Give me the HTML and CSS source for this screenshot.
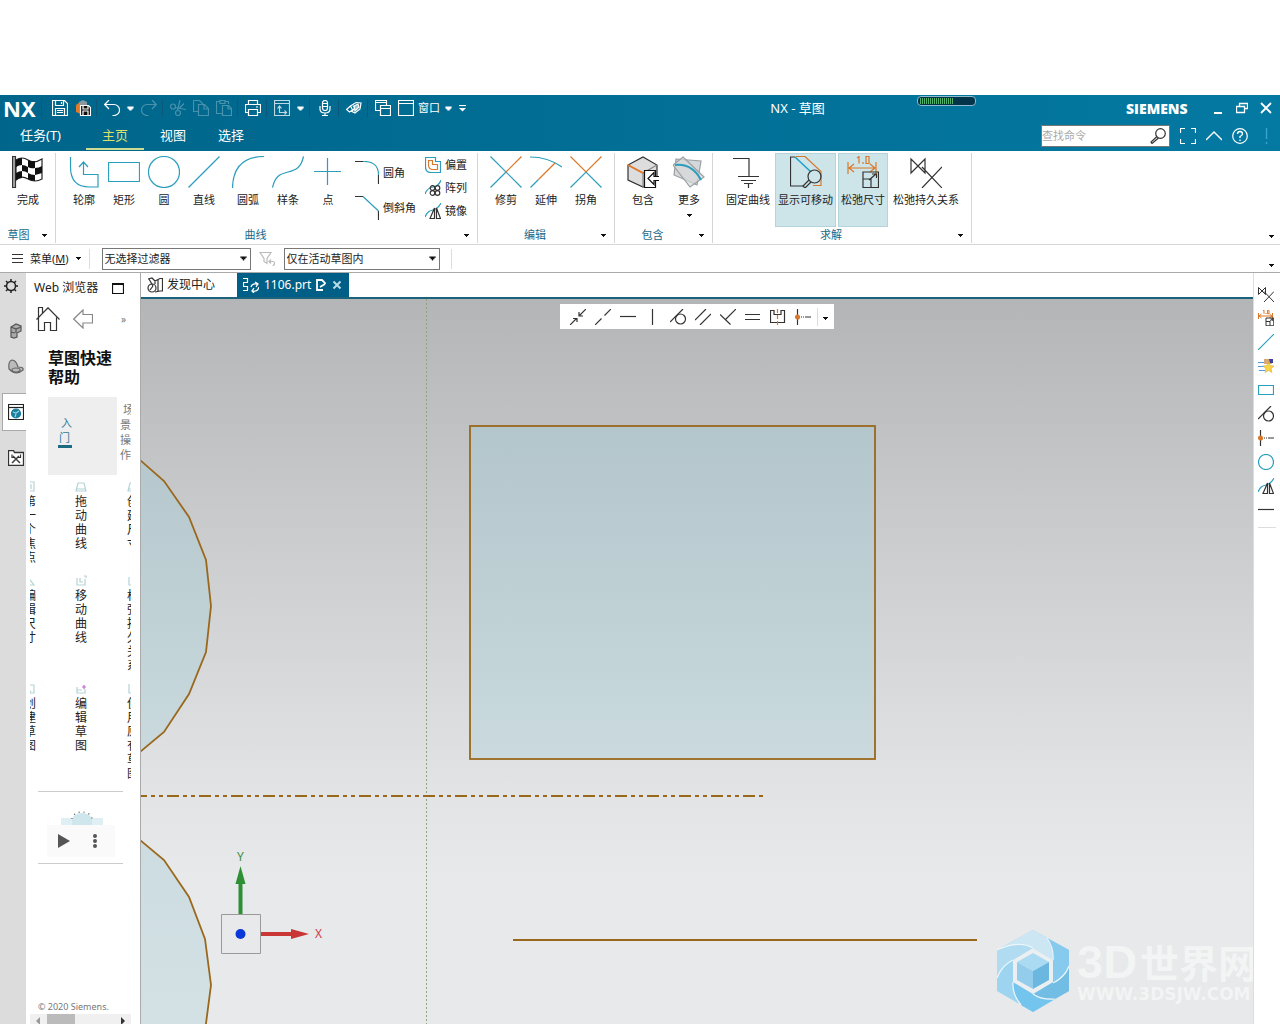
FILE: index.html
```html
<!DOCTYPE html>
<html lang="zh-CN">
<head>
<meta charset="utf-8">
<title>NX - 草图</title>
<link rel="stylesheet" href="styles.css">
</head>
<body>
<svg class="defs" aria-hidden="true">
  <defs>
    <symbol id="caret" viewBox="0 0 7 7"><path d="M1 2h5v1h-1v1h-1v1h-1v-1h-1v-1h-1z" fill="currentColor"/></symbol>
    <symbol id="tangent" viewBox="0 0 16 16"><circle cx="10.500" cy="10" r="5"/><path d="M0 13L13 0"/></symbol>
    <symbol id="mid" viewBox="0 0 16 16"><path d="M2.500 0v16M10 8h6" /><path d="M4 8h6" stroke-dasharray="1 1"/><circle cx="2.500" cy="8" r="2" fill="#d9792b" stroke="#d9792b"/></symbol>
    <symbol id="mirror" viewBox="0 0 16 16"><path d="M0 14C2 9 4 8 8 7S14 4 16 0" stroke="#2b9dbd"/><path d="M9.500 5v10.500H5zM11.500 5v10.500H15.500z"/></symbol>
    <symbol id="relax" viewBox="0 0 32 32"><path d="M1 3v14L15 3v14zM32 11L12 32M12 11L32 32"/></symbol>
    <symbol id="dim" viewBox="0 0 32 32"><path d="M1 6v12M29 6v12M2 12h26M7 8l-5 4 5 4M23 8l5 4-5 4" stroke="#d9792b"/><path d="M10 2l2-1.500v7M22 .5h-3v7h3zM16 6v2" stroke="#d9792b"/><path d="M16 16h15.500v15.500H16zM16 23h8v8M22 24l7-6M25 18h4.500v4"/></symbol>
  </defs>
</svg>
<div class="app">
  <header class="head">
    <div class="titlebar">
      <div class="quick">
        <span class="logo">NX</span><i class="sep first"></i>
        <button class="q" aria-label="保存"><svg viewBox="0 0 16 16"><path d="M.5.500h12l3 3v12H.5zM3.500.500v5h8v-5M9.500 2v2M3.500 15V8.500h9V15M5 10.500h6M5 12.500h6"/></svg></button>
        <button class="q" aria-label="另存"><svg viewBox="0 0 16 16"><path d="M1 5l4-3 5 2v9l-4 1-5-2z" fill="#e07a28" stroke="none"/><path d="M4 2l4-2 4 2v4H5z" fill="#8b98a0" stroke="none"/><path d="M5.500 5.500h8l2 2v8h-10z" fill="#111" stroke="#fff"/><path d="M8 6v3h5V6M8 15v-4h5v4"/></svg></button>
        <i class="sep"></i>
        <button class="q" aria-label="撤消"><svg viewBox="0 0 16 16"><path d="M5 0L.7 4.500 5 9M1 4.500h9a5.500 5.500 0 0 1 0 11H8.500"/></svg></button>
        <button class="c" aria-label="撤消列表"><svg><use href="#caret"/></svg></button>
        <button class="q dim" aria-label="重做"><svg viewBox="0 0 16 16"><path d="M11 0l4.300 4.500L11 9M15 4.500H6a5.500 5.500 0 0 0 0 11h1.500"/></svg></button>
        <i class="sep"></i>
        <button class="q dim" aria-label="剪切"><svg viewBox="0 0 16 16"><circle cx="3" cy="6.500" r="2.500"/><circle cx="8" cy="13" r="2.500"/><path d="M5 7.500l11 2M7.500 10.500L10 0M9 8.500l5-5"/></svg></button>
        <button class="q dim" aria-label="复制"><svg viewBox="0 0 16 16"><path d="M5.500 11.500h-5V.5h6l3 3v1M5.500 4.500h6l4 4v7h-10zM11 5v4h4"/></svg></button>
        <button class="q dim" aria-label="粘贴"><svg viewBox="0 0 16 16"><path d="M6 13.500H.5v-12H4M9 1.500h3.500V4M4 .5h5v3H4zM6.500 5.500h6l3 3v7h-9zM12 6v3h3"/></svg></button>
        <i class="sep"></i>
        <button class="q" aria-label="打印"><svg viewBox="0 0 16 16"><path d="M3.500 4V.5h9V4M3.500 12.500h-3v-8h15v8h-3M3.500 9.500h9v6h-9zM11 7h2"/></svg></button>
        <i class="sep"></i>
        <button class="q soft" aria-label="草图视图"><svg viewBox="0 0 16 16"><path d="M.5.500h15v15H.5zM.5 3.500h15M5.500 7v5.500H12M3.500 8.500L5.500 6l2 2.500M10.500 10.500l2 2-2 2"/></svg></button>
        <button class="c" aria-label="视图列表"><svg><use href="#caret"/></svg></button>
        <i class="sep"></i>
        <button class="q" aria-label="语音"><svg viewBox="0 0 16 16"><rect x="5.500" y=".5" width="5" height="10" rx="2.500"/><path d="M3 6v3q0 4 5 4t5-4V6M8 13v3M5 15.500h6M6 3.500h4M6 6.500h4"/></svg></button>
        <i class="sep"></i>
        <button class="q" aria-label="橡皮擦"><svg viewBox="0 0 16 16"><path d="M.5 9.500l4-3.500 2 4-3 2zM4.500 6L10 2.500l5 .5-1 6-5 4-3-1.500 3-4-2-1.500" /><path d="M8 6l4-2 1 3-4 4z" fill="#9cc4d4"/></svg></button>
        <i class="sep"></i>
        <button class="q" aria-label="层叠窗口"><svg viewBox="0 0 16 16"><path d="M5 10.500H.5V.5h11v5M.5 2.500h11M5.500 5.500h10v10h-10zM5.500 8.500h10"/></svg></button>
        <button class="q" aria-label="新窗口"><svg viewBox="0 0 16 16"><path d="M.5.500h15v15H.5zM.5 3.500h15"/></svg></button>
        <button class="qt">窗口</button>
        <button class="c" aria-label="窗口列表"><svg><use href="#caret"/></svg></button>
        <button class="c" aria-label="自定义"><svg viewBox="0 0 7 7"><path d="M0 .5h7"/><path d="M0 3h7L3.500 6.500z" fill="#fff" stroke="none"/></svg></button>
      </div>
      <div class="title">NX - 草图</div>
      <div class="siemens">SIEMENS</div>
      <div class="winbtns">
        <button aria-label="最小化"><svg viewBox="0 0 12 12"><path d="M2 11h8" stroke-width="2"/></svg></button>
        <button aria-label="还原"><svg viewBox="0 0 12 12"><path d="M3.500 4V1.500h8v5H9M.5 4.500h8v6h-8z" stroke-width="1.300"/></svg></button>
        <button aria-label="关闭"><svg viewBox="0 0 12 12"><path d="M1 1l10 10M11 1L1 11" stroke-width="1.800"/></svg></button>
      </div>
      <div class="meter"><i></i></div>
    </div>
    <div class="menubar">
      <nav class="tabs">
        <a href="#" class="task">任务(T)</a><a href="#" class="on">主页</a><a href="#">视图</a><a href="#">选择</a>
      </nav>
      <label class="search"><input type="text" placeholder="查找命令" aria-label="查找命令"><svg viewBox="0 0 16 16"><circle cx="10.500" cy="5.500" r="4.800"/><path d="M7 8.500L1 14l1 1.500L8.500 10"/></svg></label>
      <div class="helpers">
        <button aria-label="全屏"><svg viewBox="0 0 16 16"><path d="M.5 5V.5H5M11 .5h4.500V5M15.500 11v4.500H11M5 15.500H.5V11"/></svg></button>
        <button aria-label="折叠功能区"><svg viewBox="0 0 16 16"><path d="M0 12l8-8 8 8" stroke-width="1.400"/></svg></button>
        <button aria-label="帮助"><svg viewBox="0 0 16 16"><circle cx="8" cy="8" r="7.300"/><path d="M5.500 6q0-2.500 2.500-2.500T10.500 6Q10.500 7.200 8 8.500V10M8 11.500v1.500" stroke-width="1.300"/></svg></button>
        <button aria-label="通知"><svg viewBox="0 0 16 16"><path d="M8.500 0v11M8.500 14v2" stroke="#35a3cc" stroke-width="1.500"/></svg></button>
      </div>
    </div>
  </header>

  <section class="ribbon">
    <div class="group g1">
      <div class="tools"><button class="big"><svg viewBox="0 0 32 32"><path d="M.5.500h3v31h-3z" fill="#aaa" stroke="#333"/><path d="M4 4q6-4 12 0t14-1v20q-7 4-14 0T4 24z" fill="#fff" stroke="#222"/><path d="M4 4q3-2 6-2v7q-3 0-6 2zM16 4q3 2 7 1v7q-4 1-7-1zM10 9q3 0 6 2v6q-3-2-6-2zM23 12q4 0 7-2v7q-3 1-7 2zM4 17q3-2 6-2v7q-3 0-6 2zM16 17q3 2 7 2v6q-4 0-7-2z" fill="#111" stroke="none"/></svg>完成</button></div>
      <div class="foot"><span>草图</span><button class="c" aria-label="草图选项"><svg><use href="#caret"/></svg></button></div>
    </div>
    <div class="group g2">
      <div class="tools">
        <div class="set blue">
          <button class="big"><svg viewBox="0 0 32 32"><path d="M2.500 1v10q0 20 19 20h8.500V18.500H15.500V7M11 11l4.500-5 4.500 5"/></svg>轮廓</button>
          <button class="big"><svg viewBox="0 0 32 32"><path d="M.5 6.500h31v19H.5z"/></svg>矩形</button>
          <button class="big"><svg viewBox="0 0 32 32"><circle cx="16" cy="16" r="15.500"/></svg>圆</button>
          <button class="big"><svg viewBox="0 0 32 32"><path d="M.5 31.500l31-31"/></svg>直线</button>
        </div>
        <div class="set blue">
          <button class="big"><svg viewBox="0 0 32 32"><path d="M.5 32Q1 1 32 .5"/></svg>圆弧</button>
          <button class="big"><svg viewBox="0 0 32 32"><path d="M.5 31.500C3 20 8 18 16 16S29 12 31.500.5"/></svg>样条</button>
          <button class="big"><svg viewBox="0 0 32 32"><path d="M15.500 2v27M2 15.500h27"/></svg>点</button>
        </div>
        <div class="stack two">
          <button><svg viewBox="0 0 24 24"><path d="M0 .5h8M23.500 14v9"/><path d="M8 .5Q23.500 0 23.500 14" stroke="#2b9dbd"/></svg>圆角</button>
          <button><svg viewBox="0 0 24 24"><path d="M0 .5h8M23.500 15v9"/><path d="M8 .5L23.500 15" stroke="#2b9dbd"/></svg>倒斜角</button>
        </div>
        <div class="stack three">
          <button><svg viewBox="0 0 16 16"><path d="M.5.500h10v4h5v11H6Q.5 15.500.5 10z" stroke="#2b9dbd"/><path d="M3.500 3.500h4v4h5v5H8Q3.500 12.500 3.500 8z" stroke="#d9792b"/></svg>偏置</button>
          <button><svg viewBox="0 0 16 16"><path d="M0 14Q2 8 8 7T16 0" stroke="#2b9dbd"/><circle cx="7.500" cy="8" r="2.300"/><circle cx="12.500" cy="8" r="2.300"/><circle cx="7.500" cy="13" r="2.300"/><circle cx="12.500" cy="13" r="2.300"/></svg>阵列</button>
          <button><svg><use href="#mirror"/></svg>镜像</button>
        </div>
      </div>
      <div class="foot"><span>曲线</span><button class="c" aria-label="曲线选项"><svg><use href="#caret"/></svg></button></div>
    </div>
    <div class="group g3">
      <div class="tools">
        <button class="big"><svg viewBox="0 0 32 32"><path d="M.5.500l31 31M.5 31.500L16 16" stroke="#2b9dbd"/><path d="M16 16L31.500.5" stroke="#d9792b"/></svg>修剪</button>
        <button class="big"><svg viewBox="0 0 32 32"><path d="M0 1Q18 1 32 11M.5 31.500l8-8" stroke="#2b9dbd"/><path d="M8.500 23.500L25 7" stroke="#d9792b"/></svg>延伸</button>
        <button class="big"><svg viewBox="0 0 32 32"><path d="M.5 31.500L16 16l15.500 15.500" stroke="#2b9dbd"/><path d="M.5.500L16 16 31.500.5" stroke="#d9792b"/></svg>拐角</button>
      </div>
      <div class="foot"><span>编辑</span><button class="c" aria-label="编辑选项"><svg><use href="#caret"/></svg></button></div>
    </div>
    <div class="group g4">
      <div class="tools">
        <button class="big"><svg viewBox="0 0 32 32"><path d="M1 9l15-8 14 8v13l-14 9L1 24z" fill="#ddd"/><path d="M1 9l15 8 14-8M16 17v14" stroke="#888"/><path d="M1 9l15 8" stroke="#e87722" stroke-width="1.500"/><path d="M17.500 14.500h11v17h-11z" fill="#fff" stroke="#111"/><path d="M32 20.500h-5v-4l-6 6 6 6v-4h5" fill="#fff" stroke="#111"/></svg>包含</button>
        <button class="big"><svg viewBox="0 0 32 32"><path d="M3 3l25 2-4 24L1 19z" fill="#d5d8da" stroke="#9aa0a4"/><path d="M10 1l21 20-14 10L0 9z" fill="#d5d8da" fill-opacity=".7" stroke="#9aa0a4"/><path d="M2 9Q19 7 28 24" stroke="#2b9dbd" stroke-width="2"/></svg>更多<svg class="tri"><use href="#caret"/></svg></button>
      </div>
      <div class="foot"><span>包含</span><button class="c" aria-label="包含选项"><svg><use href="#caret"/></svg></button></div>
    </div>
    <div class="group g5">
      <div class="tools">
        <button class="big"><svg viewBox="0 0 32 32"><path d="M1 2.500h16v18M6 20.500h21M9 24.500h15M12 27.500h9M16.500 28v4"/></svg>固定曲线</button>
        <button class="big hot"><svg viewBox="0 0 32 32"><path d="M5 1H.5v29h13"/><path d="M5 1l16 15" stroke="#1a9fc9" stroke-width="1.500"/><path d="M6 .5h9l16 15v14h-8" stroke="#d9792b"/><circle cx="24.500" cy="20.500" r="6.500"/><path d="M19 24l-6 6 2 2 6-6"/></svg>显示可移动</button>
        <button class="big hot"><svg><use href="#dim"/></svg>松弛尺寸</button>
        <button class="big"><svg><use href="#relax"/></svg>松弛持久关系</button>
      </div>
      <div class="foot"><span>求解</span><button class="c" aria-label="求解选项"><svg><use href="#caret"/></svg></button></div>
    </div>
    <button class="c last" aria-label="功能区选项"><svg><use href="#caret"/></svg></button>
  </section>

  <section class="filters">
    <button class="menu"><svg class="ham" viewBox="0 0 12 12"><path d="M0 1.500h11M0 5.500h11M0 9.500h11"/></svg><span>菜单(<u>M</u>)</span><svg class="tri"><use href="#caret"/></svg></button>
    <i class="vr"></i>
    <span class="pick p1"><select aria-label="选择过滤器"><option>无选择过滤器</option></select><svg><use href="#caret"/></svg></span>
    <button class="funnel" aria-label="重置过滤器"><svg viewBox="0 0 16 16"><path d="M1 1.500h11l-4 6v5l-3-2v-3zM10 10.500h4q1.500 0 1.500 2t-2 2M12 8.500l-2 2 2 2"/></svg></button>
    <span class="pick p2"><select aria-label="选择范围"><option>仅在活动草图内</option></select><svg><use href="#caret"/></svg></span>
    <i class="vr"></i>
    <button class="c last" aria-label="工具条选项"><svg><use href="#caret"/></svg></button>
  </section>

  <main class="main">
    <nav class="rail">
      <button class="gear" aria-label="设置"><svg viewBox="0 0 16 16"><circle cx="8" cy="8" r="4.500" stroke-width="1.500"/><path d="M8 1v3M8 12v3M1 8h3M12 8h3M3 3l2 2M11 11l2 2M13 3l-2 2M5 11l-2 2" stroke-width="1.500"/></svg></button>
      <button aria-label="装配导航器"><svg viewBox="0 0 16 16"><path d="M3 4l5-3 5 2v5l-4 2v4l-3 1-3-1z" fill="#aaa" stroke="#555"/><path d="M3 4l5 2 5-2M8 6v4M3 9l4 1" stroke="#555"/></svg></button>
      <button aria-label="部件导航器"><svg viewBox="0 0 16 16"><path d="M1 10Q0 2 4 1q4 0 6 7 6 0 5 3-7 6-14-1z" fill="#bbb" stroke="#666"/><ellipse cx="8" cy="11" rx="4" ry="2" stroke="#666"/></svg></button>
      <button class="cur" aria-label="Web 浏览器"><svg viewBox="0 0 16 16"><path d="M.5.500h15v15H.5z" fill="#fff" stroke="#222"/><path d="M.5 3.500h15" stroke="#222"/><circle cx="8" cy="9.500" r="4.500" fill="#1b7f9e" stroke="#1b7f9e"/><path d="M5 8l3 1 3-2M7 13l1-3" stroke="#9fd3e2"/></svg></button>
      <button aria-label="重用库"><svg viewBox="0 0 16 16"><path d="M.5 15.500V.5h5l1 2h9v13z" fill="#fff" stroke="#333" stroke-width="1.300"/><path d="M5 6l7 7M11 6l-7 7" stroke="#444" stroke-width="1.600"/><path d="M4 4.500v3h3M12.500 4.500v3h-3"/></svg></button>
    </nav>

    <aside class="panel">
      <div class="phead"><span>Web 浏览器</span><button aria-label="最大化"><svg viewBox="0 0 12 12"><path d="M.5 1.500h11v10H.5zM.5 2.500h11"/></svg></button></div>
      <div class="pnav">
        <button aria-label="主页"><svg class="home" viewBox="0 0 24 24"><path d="M.5 12.500L12 .8l11.500 11.700M2.500 10.500v13h6v-8h6v8h6v-13M2.500 10V.5h4V6"/></svg></button>
        <button aria-label="后退"><svg class="back" viewBox="0 0 20 20"><path d="M10 1L.7 10 10 19v-5h9.500V5.500H10z"/></svg></button>
        <button class="more" aria-label="更多">»</button>
      </div>
      <div class="web">
        <h2>草图快速帮助</h2>
        <div class="subtabs"><a href="#" class="sel"><span>入门</span></a><a href="#" class="nx">场景操作</a></div>
        <div class="cards">
          <a href="#"><svg viewBox="0 0 12 12"><path d="M1 1h9v9H1zM3 4h4v4"/></svg>第一个焦点</a>
          <a href="#"><svg viewBox="0 0 12 12"><path d="M3 2h6l2 8H1zM1 8h10"/></svg>拖动曲线</a>
          <a href="#"><svg viewBox="0 0 12 12"><path d="M3 2h6l2 8H1zM1 8h10"/></svg>创建尺寸</a>
          <a href="#"><svg viewBox="0 0 12 12"><path d="M3 2l3 3 4 5H1z"/></svg>编辑尺寸</a>
          <a href="#"><svg viewBox="0 0 12 12"><path d="M2 3v7h8V4M5 3v4h3M9 1h2v2"/></svg>移动曲线</a>
          <a href="#"><svg viewBox="0 0 12 12"><path d="M2 2v8h8V2"/></svg>松弛持久关系</a>
          <a href="#"><svg viewBox="0 0 12 12"><path d="M2 2h8v8H2M3 5l4 4"/></svg>创建草图</a>
          <a href="#"><svg viewBox="0 0 12 12"><path d="M2 4v6h8V6M2 7h5"/><path d="M7 4h4M9 2v4" stroke="#c46ad0"/></svg>编辑草图</a>
          <a href="#"><svg viewBox="0 0 12 12"><path d="M2 1v9h8"/></svg>使用原有草图</a>
        </div>
        <div class="video">
          <svg class="thumb" viewBox="0 0 68 26"><path d="M14 19h42v7H14z" fill="#e0eff3"/><path d="M25 26v-5a10 7 0 0 1 20 0v5z" fill="#cfe6ec"/><path d="M25 20a10 7 0 0 1 20 0" fill="none" stroke="#555" stroke-dasharray="1 4"/></svg>
          <div class="play"><button aria-label="播放"><svg viewBox="0 0 12 14"><path d="M0 0l12 7L0 14z" fill="#555"/></svg></button><button aria-label="选项"><svg viewBox="0 0 12 14"><circle cx="6" cy="2" r="2" fill="#555"/><circle cx="6" cy="7" r="2" fill="#555"/><circle cx="6" cy="12" r="2" fill="#555"/></svg></button></div>
        </div>
        <p class="copy">© 2020 Siemens.</p>
        <div class="hbar"><svg viewBox="0 0 6 8"><path d="M5 0v8L1 4z" fill="#999"/></svg><i></i><svg viewBox="0 0 6 8"><path d="M1 0v8l4-4z" fill="#333"/></svg></div>
      </div>
    </aside>

    <section class="work">
      <nav class="docs">
        <a href="#" class="doc"><svg viewBox="0 0 16 16"><path d="M1 2l4-1 3 3 5-2.500h2.500V14H13l-5 1M2 2l4 7M11 3v11M8 4v3"/><circle cx="5" cy="11" r="4"/><path d="M3 13l3-4"/></svg>发现中心</a>
        <a href="#" class="doc act"><svg viewBox="0 0 16 16"><path d="M0 1.500h5M0 5.500h5M0 9.500h5M0 13.500h5M4.500 1v4M.5 5v4M4.500 9v4"/><path d="M8 10q1-4 6-3M12 5l3 2-2 3M16 10q-1 5-6 4M11 16l-2-2 2-3" stroke-width="1.300"/></svg><span>1106.prt</span><svg class="sm" viewBox="0 0 10 12"><path d="M7 11H1V1h5l3 3v1M4 8l5-3" stroke-width="1.800"/></svg><svg class="sm" viewBox="0 0 10 12"><path d="M1.500 2.500l7 7M8.500 2.500l-7 7" stroke="#b8dbe8" stroke-width="2"/></svg></a>
      </nav>
      <div class="canvas">
        <svg class="sketch" role="img" aria-label="草图">
          <defs>
            <linearGradient id="face" gradientUnits="userSpaceOnUse" x1="0" y1="127" x2="0" y2="725"><stop offset="0" stop-color="#b3c6cb"/><stop offset=".56" stop-color="#cadade"/><stop offset="1" stop-color="#d3e1e5"/></linearGradient>
          </defs>
          <path d="M285.500 0V800" stroke="#8fa480" stroke-dasharray="2 2"/>
          <g fill="url(#face)" stroke="#99681c" stroke-width="1.800">
            <path d="M-1 161L23 182 48 218 65 261 70 307 65 353 48 395 23 433-1 453"/>
            <path d="M-1 541L23 561 48 598 64 640 70 686 64 732 48 774 23 812-1 832"/>
            <rect x="329" y="127" width="405" height="333"/>
            <path d="M0 497H622" stroke-dasharray="12 4 4 4 4 4" stroke-dashoffset="6"/>
            <path d="M372 641H836"/>
          </g>
          <g class="triad">
            <path d="M80.500 615.500h39v39h-39z" fill="none" stroke="#9a9a9a"/>
            <path d="M97.500 584h4v31h-4z" fill="#2f8f35"/><path d="M99.500 567l5 18h-10z" fill="#2f8f35"/>
            <path d="M120 633h32v4h-32z" fill="#c83636"/><path d="M168 635l-18-5v10z" fill="#c83636"/>
            <circle cx="99.500" cy="635" r="5" fill="#0838d8"/>
            <text x="96" y="562" fill="#3f8f45">Y</text><text x="174" y="639" fill="#d23c46">X</text>
          </g>
        </svg>
        <div class="float">
          <button aria-label="重合"><svg viewBox="0 0 16 16"><path d="M0 16L6.500 9.500M16 0L9.500 6.500M3 9.500h4V13M9 3v4h4"/></svg></button>
          <button aria-label="共线"><svg viewBox="0 0 16 16"><path d="M0 16l6.500-6.500M9.500 6.500L16 0"/></svg></button>
          <button aria-label="水平"><svg viewBox="0 0 16 16"><path d="M0 7.500h16"/></svg></button>
          <button aria-label="竖直"><svg viewBox="0 0 16 16"><path d="M7.500 0v16"/></svg></button>
          <button aria-label="相切"><svg><use href="#tangent"/></svg></button>
          <button aria-label="平行"><svg viewBox="0 0 16 16"><path d="M0 11L11 0M5 16L16 5"/></svg></button>
          <button aria-label="垂直"><svg viewBox="0 0 16 16"><path d="M16 0L5.500 10.500M0 5.500l10.500 10"/></svg></button>
          <button aria-label="等长"><svg viewBox="0 0 16 16"><path d="M0 5.500h15M0 10.500h15"/></svg></button>
          <button aria-label="对称"><svg viewBox="0 0 16 16"><path d="M4 1.500H.5v12h14v-12H11v4H4z"/><path d="M7.500 0v16" stroke="#d9792b" stroke-dasharray="4 2"/></svg></button>
          <button aria-label="中点"><svg><use href="#mid"/></svg></button>
          <i></i>
          <button class="c" aria-label="更多约束"><svg><use href="#caret"/></svg></button>
        </div>
        <div class="mark">
          <svg viewBox="0 0 72 82"><path d="M36 0L72 20v41L36 82 0 61V20z" fill="#9dd4ef"/><path d="M0 20L36 0 52 9Q56 16 56 30L36 18Q22 10 0 20z" fill="#cce6f4"/><path d="M50 8l22 12v16Q68 46 56 53V30Q56 18 50 8z" fill="#86cbee"/><path d="M72 36v25L58 69Q44 69 36 64l20-12Q68 46 72 36z" fill="#71bde4"/><path d="M58 69L36 82 24 75Q16 66 16 52l20 12Q46 70 58 69z" fill="#74c5ee"/><path d="M0 20Q22 10 36 18L16 30Q4 36 0 48z" fill="#b0dbf1"/><path d="M0 20Q22 10 36 18M50 8Q57 18 56 30M72 36Q68 47 56 53M58 69Q44 70 36 64M24 75Q15 64 16 52M0 48Q5 35 16 30" fill="none" stroke="#eef5f9"/><path d="M36 18l20 12v22L36 64 16 52V30z" fill="#eceff1"/><path d="M36 23l16 9-16 9-16-9z" fill="#aadbf2"/><path d="M20 32l16 9v18l-16-9z" fill="#94cdeb"/><path d="M52 32l-16 9v18l16-9z" fill="#6ab8e0"/></svg>
          <div class="words"><div class="name"><b>3D</b>世界网</div><div class="url">WWW.3DSJW.COM</div></div>
        </div>
      </div>
    </section>

    <nav class="side">
      <button aria-label="松弛持久关系"><svg class="thick"><use href="#relax"/></svg></button>
      <button aria-label="松弛尺寸"><svg class="thick"><use href="#dim"/></svg></button>
      <button aria-label="直线"><svg viewBox="0 0 16 16"><path d="M0 16L16 0" stroke="#2b9dbd"/></svg></button>
      <button aria-label="收藏"><svg viewBox="0 0 16 16"><path d="M0 4.500h8M0 8.500h7M1 12.500h6" stroke="#4a9be0"/><path d="M6 1h8v5H6z" fill="#d8a878" stroke="none"/><path d="M11 1h4v4h-3z" fill="#3f3f9c" stroke="none"/><path d="M10.500 4l1.700 3.500 3.800.5-2.800 2.500.7 4-3.400-2-3.400 2 .7-4L5 8l3.800-.5z" fill="#f8d44a" stroke="#d8a21c" stroke-width=".5"/></svg></button>
      <button aria-label="矩形"><svg viewBox="0 0 16 16"><path d="M.5 3.500h15v9H.5z" stroke="#2b9dbd"/></svg></button>
      <button aria-label="相切"><svg><use href="#tangent"/></svg></button>
      <button aria-label="中点"><svg><use href="#mid"/></svg></button>
      <button aria-label="圆"><svg viewBox="0 0 16 16"><circle cx="8" cy="8" r="7.500" stroke="#2b9dbd"/></svg></button>
      <button aria-label="镜像"><svg><use href="#mirror"/></svg></button>
      <button aria-label="水平"><svg viewBox="0 0 16 16"><path d="M0 7.500h16"/></svg></button>
      <hr>
    </nav>
  </main>
</div>
</body>
</html>
```
FILE: styles.css
```css
* { box-sizing: border-box; }
body {
  margin: 0;
  background: #fff;
  color: #222;
  font: 11px/16px "Noto Sans", "Noto Sans CJK SC", sans-serif;
}
button {
  margin: 0; padding: 0; border: 0; background: none;
  font: inherit; color: inherit;
  display: flex; align-items: center; justify-content: center;
  white-space: nowrap; flex: none;
}
a { color: inherit; text-decoration: none; }
svg { display: block; flex: none; width: 16px; height: 16px; fill: none; stroke: #333; stroke-width: 1.2; }
.defs { position: absolute; width: 0; height: 0; }
.c { width: 14px; height: 14px; }
.c svg, .tri { width: 7px; height: 7px; stroke: none; color: #111; }
.app { min-height: 100vh; padding-top: 95px; display: flex; flex-direction: column; }

/* Title bar and menu tabs */
.head { background: linear-gradient(90deg, #00658a, #0479a2); color: #fff; }
.head svg { stroke: #fff; }
.head .c svg { color: #fff; }
.titlebar { display: flex; align-items: center; height: 26px; position: relative; }
.quick { display: flex; align-items: center; height: 26px; }
.logo { width: 41px; padding-left: 3px; font: bold 22px/26px "Noto Sans", sans-serif; }
.sep { width: 1px; height: 18px; margin: 0 3px 0 2px; background: #0b587a; }
.sep.first { margin: 0 6px 0 0; }
.q { width: 23px; height: 24px; }
.q.dim { opacity: .28; }
.q.soft { opacity: .75; }
.qt { width: 24px; }
.title { flex: 1; text-align: center; font-size: 13px; }
.siemens { width: 80px; font: 800 14px/16px "Open Sans", sans-serif; padding-top: 2px; }
.winbtns { display: flex; padding-right: 2px; }
.winbtns button { width: 24px; height: 24px; }
.winbtns svg { width: 12px; height: 12px; }
.meter { position: absolute; right: 304px; top: 1px; width: 59px; height: 10px; padding: 1px 2px; border: 1px solid #8fb9cc; border-radius: 4px; background: #04344a; }
.meter i { display: block; width: 34px; height: 6px; background: repeating-linear-gradient(90deg, #4fb06e 0 1px, #04344a 1px 2px); }
.menubar { display: flex; align-items: center; justify-content: space-between; height: 30px; }
.tabs { display: flex; font-size: 13px; line-height: 25px; text-align: center; }
.tabs a { width: 58px; border-bottom: 2px solid transparent; }
.tabs .task { width: 86px; padding-right: 5px; }
.tabs .on { color: #dbe06f; border-color: #cddc91; }
.search { display: flex; align-items: center; width: 129px; height: 22px; margin-left: auto; margin-bottom: 1px; padding-right: 3px; background: #fff; border: 1px solid #777; }
.search input { flex: 1; min-width: 0; padding: 0; border: 0; outline: 0; background: none; font: inherit; }
.search input::placeholder { color: #aaa; opacity: 1; }
.search svg { stroke: #333; }
.helpers { display: flex; padding: 0 1px 1px 5px; }
.helpers button { width: 26px; height: 24px; }

/* Ribbon */
.ribbon { display: flex; height: 94px; padding: 2px 2px 1px 0; border-bottom: 1px solid #d6d6d6; }
.group { display: flex; flex-direction: column; border-right: 1px solid #d6d6d6; }
.tools { display: flex; height: 74px; }
.foot { display: grid; grid-template-columns: 1fr 22px; align-items: center; justify-items: center; color: #17698a; }
.g1 .foot { padding-left: 4px; }
.g1 .tools { padding: 0 7px 0 8px; }
.g3 .tools { padding: 0 8px; }
.g2 .tools { padding: 0 10px 0 8px; }
.g4 .tools { padding: 0 0 0 5px; }
.g5 .tools { padding: 0 9px 0 10px; gap: 2px; }
.g4 .big { width: 46px; }
.set { display: flex; }
.set + .set { margin-left: 4px; }
.set.blue svg { stroke: #2b9dbd; }
.big { flex-direction: column; justify-content: flex-start; width: 40px; padding-top: 3px; gap: 4px; }
.big svg { width: 32px; height: 32px; }
.big .tri { width: 7px; height: 7px; }
.g5 .big { width: auto; padding: 2px 2px 0; border: 1px solid transparent; }
.g5 .hot { background: #cde4e9; border-color: #b5d3da; }
.stack { display: flex; flex-direction: column; }
.stack button { justify-content: flex-start; gap: 4px; }
.two { margin-left: 7px; padding-top: 2px; }
.two button { height: 35px; }
.two svg { width: 24px; height: 24px; }
.three { margin-left: 9px; }
.three button { height: 23px; }
.last { margin-left: auto; align-self: flex-end; }

/* Selection bar */
.filters { display: flex; align-items: center; height: 28px; padding: 0 2px 0 12px; border-bottom: 1px solid #aaa; }
.menu { gap: 6px; }
.ham { width: 12px; height: 12px; }
.vr { width: 1px; height: 20px; margin: 0 12px 0 7px; background: #ddd; }
.pick { display: grid; align-items: center; }
.pick select { grid-area: 1 / 1; appearance: none; height: 22px; margin: 0; padding: 0 2px; border: 1px solid #777; border-radius: 0; background: #fff; font: inherit; color: #222; }
.pick svg { grid-area: 1 / 1; justify-self: end; width: 9px; height: 9px; margin-right: 3px; stroke: none; color: #111; pointer-events: none; }
.p1 { width: 149px; }
.p2 { width: 156px; margin-right: 4px; }
.funnel { width: 33px; }
.funnel svg { stroke: #bbb; }

/* Work area */
.main { flex: 1; display: flex; }
.rail { width: 26px; flex: none; background: #dcdcdc; }
.rail button { width: 24px; height: 36px; margin-left: 2px; padding-left: 3px; }
.rail .gear { width: 22px; height: 26px; margin: 0 0 14px; padding: 0; }
.rail .gear svg { stroke: #222; }
.rail .cur { height: 38px; margin: 8px 0 9px 2px; background: #fff; border: 1px solid #aaa; border-right: 0; }
.panel { width: 115px; flex: none; display: flex; flex-direction: column; border-right: 1px solid #aaa; }
.phead { display: flex; align-items: center; justify-content: space-between; height: 30px; padding: 0 16px 0 8px; font-size: 12px; }
.phead svg { width: 12px; height: 12px; stroke: #111; }
.pnav { display: flex; align-items: center; height: 31px; padding-left: 10px; gap: 13px; }
.pnav .home { width: 24px; height: 24px; }
.pnav .back { width: 20px; height: 20px; stroke: #888; }
.pnav .more { margin-left: 15px; color: #777; font-size: 10px; }
.web { flex: 1; width: 101px; margin-left: 4px; overflow: hidden; display: flex; flex-direction: column; }
.web h2 { margin: 15px 14px 10px 18px; font-size: 16px; line-height: 19px; color: #111; }
.subtabs { display: flex; height: 78px; padding-left: 18px; gap: 3px; line-height: 15px; flex: none; }
.sel { width: 69px; flex: none; padding: 18px 10px; background: #eee; color: #2c7c97; }
.sel span { display: block; width: 14px; padding-left: 1px; text-indent: 2px; border-bottom: 3px solid #1c6b82; }
.nx { width: 12px; flex: none; padding-top: 5px; text-indent: 3px; color: #777; word-break: break-all; }
.cards { display: grid; grid-template-columns: 51px 52px 12px; grid-template-rows: 94px 108px 88px; margin: 6px 0 0 -6px; font-size: 12px; line-height: 14px; }
.cards a { width: 12px; word-break: break-all; }
.cards svg { width: 12px; height: 12px; margin-bottom: 2px; stroke: #b5d3d6; }
.video { margin: 20px 8px 0; padding: 7px 8px 6px 9px; border: 1px solid #ccc; border-width: 1px 0; }
.thumb { width: 100%; height: 26px; stroke: none; }
.play { display: flex; justify-content: space-around; height: 32px; padding: 0 5px 0 2px; background: #fafafa; }
.play svg { width: 12px; height: 14px; stroke: none; }
.copy { margin: auto 0 0 8px; font-size: 9px; line-height: 15px; color: #777; white-space: nowrap; }
.hbar { display: flex; align-items: center; height: 10px; padding: 0 5px; background: #f0f0f0; }
.hbar svg { width: 6px; height: 8px; stroke: none; margin-top: 3px; }
.hbar i { width: 28px; height: 10px; margin: 0 auto 0 6px; background: #bbb; }

.work { flex: 1; min-width: 0; display: flex; flex-direction: column; }
.docs { display: flex; height: 26px; border-bottom: 2px solid #1b637b; font-size: 12px; }
.doc { display: flex; align-items: center; gap: 4px; width: 96px; padding-left: 6px; }
.act { width: 112px; background: #005f87; color: #fff; gap: 5px; }
.act svg { stroke: #fff; }
.doc .sm { width: 10px; height: 12px; margin-right: 1px; }
.canvas { flex: 1; position: relative; overflow: hidden; background: linear-gradient(#b4b5b7 0, #cdced0 260px, #e2e3e4 490px, #e7e9ea 580px); }
.sketch { position: absolute; inset: 0; width: 100%; height: 100%; stroke: none; stroke-width: 1; }
.triad text { font: 12px "Noto Sans", sans-serif; }
.float { position: absolute; top: 5px; left: 50%; transform: translateX(-50%); display: flex; align-items: center; height: 25px; padding: 0 2px 0 5px; background: #fff; }
.float button { width: 25px; }
.float .c { width: 14px; padding-top: 4px; }
.float i { width: 1px; height: 18px; margin-left: 2px; background: #ddd; }
.mark { position: absolute; right: -16px; bottom: 12px; display: flex; gap: 8px; width: 272px; }
.mark svg { width: 72px; height: 82px; stroke: none; }
.words { padding-top: 7px; color: #f3f4f4; white-space: nowrap; }
.name { font: bold 39px/48px "Noto Sans CJK SC", sans-serif; }
.name b { font: bold 47px/48px "Liberation Sans", sans-serif; margin-right: 3px; }
.url { font: bold 17px/16px "DejaVu Sans", sans-serif; }

.side { width: 27px; flex: none; padding-top: 9px; border-left: 1px solid #ddd; }
.side button { width: 24px; height: 24px; }
.side .thick { stroke-width: 2; }
.side hr { width: 18px; margin: 5px 4px; border: 0; border-top: 1px solid #ddd; }
```
